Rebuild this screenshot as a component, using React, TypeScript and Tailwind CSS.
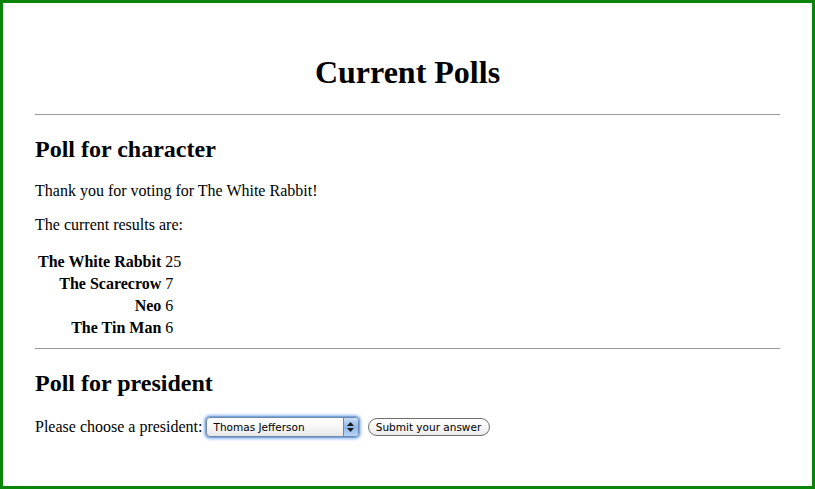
const results = [
  { name: "The White Rabbit", votes: 25 },
  { name: "The Scarecrow", votes: 7 },
  { name: "Neo", votes: 6 },
  { name: "The Tin Man", votes: 6 },
];

const App = () => {
  return (
    <div
      className="w-[815px] h-[489px] border-[3px] border-[#0a850a] bg-white px-8 pt-[30px] text-black text-[16px] leading-[18px] overflow-hidden"
      style={{ fontFamily: '"Liberation Serif", "Times New Roman", serif' }}
    >
      {/* Title */}
      <h1 className="text-[32px] leading-[37px] font-bold text-center mt-[21px] mb-[23px]">
        Current Polls
      </h1>
      <hr className="border-t border-[#999]" />

      {/* Character poll */}
      <h2 className="text-[24px] leading-[28px] font-bold mt-[20px] mb-[19px]">Poll for character</h2>
      <p className="mb-4">Thank you for voting for The White Rabbit!</p>
      <p className="mb-4">The current results are:</p>
      <table className="border-separate border-spacing-[2px]">
        <tbody>
          {results.map((r) => (
            <tr key={r.name}>
              <th className="text-right font-bold p-[1px] leading-[18px]">{r.name}</th>
              <td className="p-[1px] leading-[18px]">{r.votes}</td>
            </tr>
          ))}
        </tbody>
      </table>
      <hr className="border-t border-[#999] mt-2" />

      {/* President poll */}
      <h2 className="text-[24px] leading-[28px] font-bold mt-[20px] mb-[20px]">Poll for president</h2>
      <form className="flex items-center" onSubmit={(e) => e.preventDefault()}>
        <span>Please choose a president:</span>
        <div className="relative ml-[3px] w-[153px] h-[20px] rounded-[4px] shadow-[0_0_0_1px_#7aa7e0,0_0_3px_2px_#8fb8ef]">
          <div
            className="absolute inset-0 rounded-[4px] border border-[#6f87a8] bg-gradient-to-b from-white via-[#f6f6f6] to-[#e6e6e6] pl-[7px] text-[10.5px] leading-[18px] text-black"
            style={{ fontFamily: '"DejaVu Sans", "Liberation Sans", sans-serif' }}
          >
            Thomas Jefferson
          </div>
          <div className="absolute right-[1px] top-[1px] bottom-[1px] w-[15px] rounded-r-[3px] bg-gradient-to-b from-[#c9ddf6] via-[#8fb6ea] to-[#b9d3f5] border-l border-[#6f87a8] flex flex-col items-center justify-center gap-[2px]">
            <svg width="7" height="4" viewBox="0 0 7 4"><path d="M0 4 L3.5 0 L7 4 Z" fill="#1a1a1a" /></svg>
            <svg width="7" height="4" viewBox="0 0 7 4"><path d="M0 0 L3.5 4 L7 0 Z" fill="#1a1a1a" /></svg>
          </div>
        </div>
        <button
          type="submit"
          className="ml-[9px] w-[122px] h-[18px] rounded-full border border-[#6e6e6e] bg-gradient-to-b from-white to-[#ececec] text-[10.5px] leading-[16px] text-black text-center"
          style={{ fontFamily: '"DejaVu Sans", "Liberation Sans", sans-serif' }}
        >
          Submit your answer
        </button>
      </form>
    </div>
  );
};

export default App;
